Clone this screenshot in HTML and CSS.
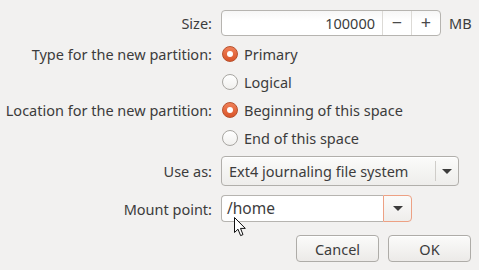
FILE: index.html
```html
<!DOCTYPE html>
<html lang="en">
<head>
    <meta charset="UTF-8">
    <title>Create partition</title>
    <link rel="stylesheet" href="styles.css">
</head>
<body>
    <div class="dialog">
        <div class="row row-size">
            <label class="caption">Size:</label>
            <div class="field">
                <div class="spin">
                    <span class="spin-value">100000</span>
                    <span class="spin-btn">&minus;</span>
                    <span class="spin-btn">+</span>
                </div>
                <span class="unit">MB</span>
            </div>
        </div>

        <div class="row row-radio">
            <label class="caption">Type for the new partition:</label>
            <div class="field"><span class="radio checked"></span>Primary</div>
        </div>
        <div class="row row-radio">
            <label class="caption"></label>
            <div class="field"><span class="radio"></span>Logical</div>
        </div>
        <div class="row row-radio">
            <label class="caption">Location for the new partition:</label>
            <div class="field"><span class="radio checked"></span>Beginning of this space</div>
        </div>
        <div class="row row-radio">
            <label class="caption"></label>
            <div class="field"><span class="radio"></span>End of this space</div>
        </div>

        <div class="row row-combo">
            <label class="caption">Use as:</label>
            <div class="field">
                <div class="combo">
                    <span class="combo-text">Ext4 journaling file system</span>
                    <span class="combo-arrow"><span class="tri"></span></span>
                </div>
            </div>
        </div>

        <div class="row row-mount">
            <label class="caption">Mount point:</label>
            <div class="field">
                <div class="entry-combo">
                    <span class="entry-text">/home</span>
                    <span class="entry-btn"><span class="tri"></span></span>
                </div>
            </div>
        </div>

        <div class="actions">
            <button class="btn btn-cancel">Cancel</button>
            <button class="btn btn-ok">OK</button>
        </div>
    </div>

    <svg class="pointer" width="13" height="20" viewBox="0 0 13 20">
        <path d="M0.5 0.5 L0.5 15.5 L4 12.2 L6.6 18.6 L9 17.6 L6.5 11.4 L11.3 11.4 Z" fill="#fff" stroke="#111" stroke-width="1" stroke-linejoin="round"/>
    </svg>
</body>
</html>
```

FILE: styles.css
```css
html,
body {
    margin: 0px;
    padding: 0px;
    background-color: #f2f1f0;
    font-family: "Noto Sans", "DejaVu Sans", sans-serif;
    font-size: 14.5px;
    color: #3c3c3c;
}

.dialog {
    position: relative;
    width: 479px;
    height: 270px;
    padding-top: 9px;
    box-sizing: border-box;
}

.row {
    display: flex;
    align-items: center;
}

.caption {
    width: 212px;
    text-align: right;
    margin-right: 9px;
    flex: none;
}

.field {
    display: flex;
    align-items: center;
}

.row-size {
    height: 27px;
}

.row-radio {
    height: 28px;
}

.row-size + .row-radio {
    margin-top: 4px;
}

.row-combo {
    height: 30px;
    margin-top: 4px;
}

.row-mount {
    height: 27px;
    margin-top: 9px;
}

/* spin button */
.spin {
    display: flex;
    width: 220px;
    height: 26px;
    box-sizing: border-box;
    border: 1px solid #b6b4b0;
    border-radius: 4px;
    background: linear-gradient(#f6f6f6, #ffffff 40%);
}

.spin-value {
    flex: 1;
    text-align: right;
    padding-right: 7px;
    line-height: 24px;
    border-right: 1px solid #dcdad6;
}

.spin-btn {
    width: 28px;
    text-align: center;
    line-height: 23px;
    font-size: 18px;
    color: #4a4a4a;
}

.spin-btn + .spin-btn {
    border-left: 1px solid #dcdad6;
}

.unit {
    margin-left: 8px;
}

/* radios */
.radio {
    width: 16px;
    height: 16px;
    box-sizing: border-box;
    border-radius: 50%;
    border: 1px solid #a8a6a2;
    background: linear-gradient(#ffffff, #f1f0ee);
    margin-left: 1px;
    margin-right: 6px;
    position: relative;
}

.radio.checked {
    border-color: #b7512d;
    background: linear-gradient(#f08058, #d9552a);
}

.radio.checked::after {
    content: "";
    position: absolute;
    left: 4px;
    top: 4px;
    width: 6px;
    height: 6px;
    border-radius: 50%;
    background: #ffffff;
}

/* combo box */
.combo {
    display: flex;
    align-items: center;
    width: 238px;
    height: 30px;
    box-sizing: border-box;
    border: 1px solid #b1afab;
    border-radius: 4px;
    background: linear-gradient(#fbfbfa, #eeedeb);
    box-shadow: inset 0 1px 0 #ffffff;
}

.combo-text {
    flex: 1;
    padding-left: 7px;
}

.combo-arrow {
    width: 22px;
    height: 20px;
    border-left: 1px solid #cfcdc9;
    display: flex;
    align-items: center;
    justify-content: center;
}

.tri {
    width: 0;
    height: 0;
    border-left: 5px solid transparent;
    border-right: 5px solid transparent;
    border-top: 5px solid #3c3c3c;
}

/* entry with drop-down */
.entry-combo {
    display: flex;
    width: 191px;
    height: 27px;
}

.entry-text {
    flex: 1;
    box-sizing: border-box;
    border: 1px solid #b6b4b0;
    border-right: none;
    border-radius: 4px 0 0 4px;
    background: #ffffff;
    padding-left: 5px;
    line-height: 25px;
    font-size: 15.5px;
}

.entry-btn {
    width: 29px;
    box-sizing: border-box;
    border: 1px solid #eda184;
    border-radius: 0 4px 4px 0;
    background: linear-gradient(#fbfbfa, #eeedeb);
    display: flex;
    align-items: center;
    justify-content: center;
}

/* dialog buttons */
.actions {
    display: flex;
    justify-content: flex-end;
    gap: 9px;
    padding-right: 8px;
    margin-top: 13px;
}

.btn {
    width: 83px;
    height: 27px;
    font-family: inherit;
    font-size: 14.5px;
    color: #3c3c3c;
    border: 1px solid #aeaca8;
    border-radius: 4px;
    background: linear-gradient(#fbfbfa, #eceae8);
    box-shadow: inset 0 1px 0 #ffffff;
    padding: 0;
}

.pointer {
    position: absolute;
    left: 234px;
    top: 217px;
}
```
